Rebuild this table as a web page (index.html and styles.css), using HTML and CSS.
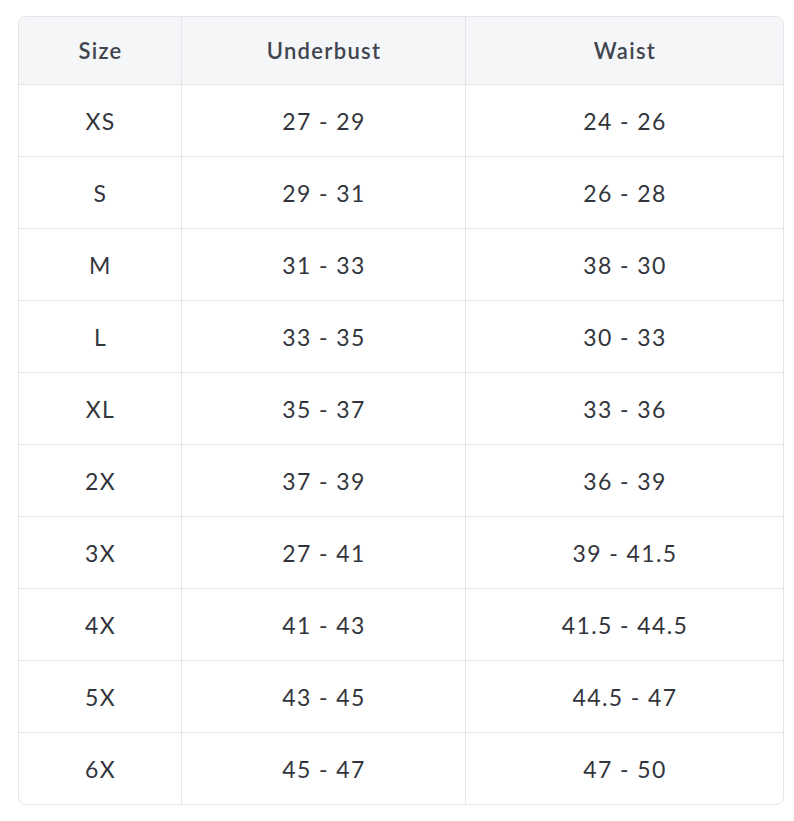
FILE: index.html
```html
<!DOCTYPE html>
<html lang="en">
<head>
<meta charset="utf-8">
<title>Size Chart</title>
<link rel="stylesheet" href="styles.css">
</head>
<body>
<div class="chart">
  <div class="cell head">Size</div>
  <div class="cell head">Underbust</div>
  <div class="cell head">Waist</div>

  <div class="cell">XS</div><div class="cell">27 - 29</div><div class="cell">24 - 26</div>
  <div class="cell">S</div><div class="cell">29 - 31</div><div class="cell">26 - 28</div>
  <div class="cell">M</div><div class="cell">31 - 33</div><div class="cell">38 - 30</div>
  <div class="cell">L</div><div class="cell">33 - 35</div><div class="cell">30 - 33</div>
  <div class="cell">XL</div><div class="cell">35 - 37</div><div class="cell">33 - 36</div>
  <div class="cell">2X</div><div class="cell">37 - 39</div><div class="cell">36 - 39</div>
  <div class="cell">3X</div><div class="cell">27 - 41</div><div class="cell">39 - 41.5</div>
  <div class="cell">4X</div><div class="cell">41 - 43</div><div class="cell">41.5 - 44.5</div>
  <div class="cell">5X</div><div class="cell">43 - 45</div><div class="cell">44.5 - 47</div>
  <div class="cell last">6X</div><div class="cell last">45 - 47</div><div class="cell last">47 - 50</div>
</div>
</body>
</html>
```
FILE: styles.css
```css
html, body {
  margin: 0;
  background: #ffffff;
}
body {
  padding: 16px 10px 0 18px;
  font-family: "Lato", "Liberation Sans", sans-serif;
}
.chart {
  width: 766px;
  box-sizing: border-box;
  border: 1px solid #e3e5e9;
  border-radius: 8px;
  overflow: hidden;
  display: grid;
  grid-template-columns: 163px 284px 1fr;
}
.cell {
  height: 72px;
  box-sizing: border-box;
  border-bottom: 1px solid #e3e5e9;
  border-right: 1px solid #e3e5e9;
  display: flex;
  align-items: center;
  justify-content: center;
  font-size: 23px;
  color: #33353d;
  letter-spacing: 1.4px;
  padding-left: 1px;
}
.cell:nth-child(3n) {
  border-right: none;
}
.cell.last {
  border-bottom: none;
  height: 71px;
}
.head {
  height: 68px;
  background: #f5f6f8;
  font-weight: 600;
  font-size: 22px;
  color: #41454f;
  letter-spacing: 1.3px;
}
```
